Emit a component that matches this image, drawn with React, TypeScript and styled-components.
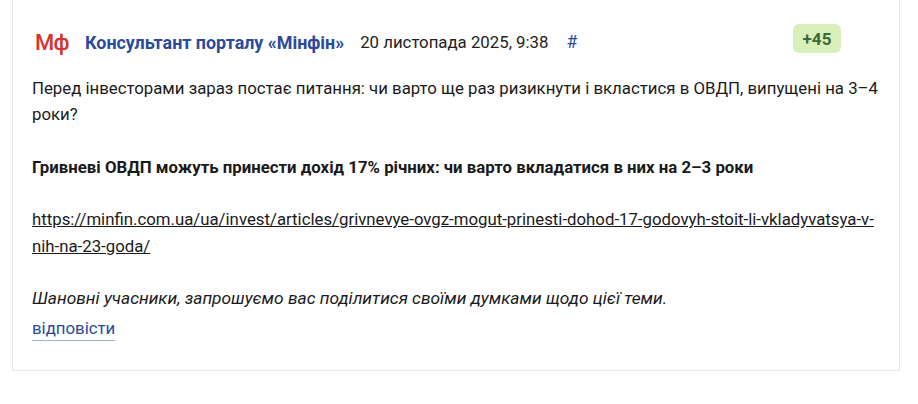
import React from 'react';
import styled, { createGlobalStyle } from 'styled-components';

const GlobalStyle = createGlobalStyle`
  html, body {
    margin: 0;
    padding: 0;
    background: #fff;
  }
  body {
    font-family: Roboto, "Liberation Sans", sans-serif;
    color: #1a1a1a;
  }
`;

const Page = styled.div`
  width: 918px;
  height: 404px;
  overflow: hidden;
  padding: 0 18px 0 12px;
  box-sizing: border-box;
`;

const Card = styled.article`
  height: 371px;
  box-sizing: border-box;
  border: 1px solid #e8e8e8;
  border-top: none;
  padding: 24px 19px 0 19px;
`;

const Header = styled.header`
  display: flex;
  align-items: center;
  height: 36px;
  margin-bottom: 15px;
  padding-right: 39px;
`;

const Logo = styled.div`
  width: 37px;
  padding-left: 3px;
  box-sizing: border-box;
  font-size: 22px;
  font-weight: 500;
  letter-spacing: -0.7px;
  color: #d5352f;
`;

const Author = styled.a`
  margin-left: 16px;
  font-size: 17.9px;
  font-weight: 700;
  color: #2b4a9b;
`;

const DateText = styled.span`
  margin-left: 16px;
  font-size: 16.8px;
  color: #222;
`;

const Anchor = styled.a`
  margin-left: 18px;
  font-size: 17.5px;
  color: #2b4a9b;
`;

const Rating = styled.div`
  margin-left: auto;
  align-self: flex-start;
  width: 48px;
  height: 29px;
  border-radius: 6px;
  background: #daf0bb;
  color: #3a6a3a;
  font-size: 17px;
  font-weight: 700;
  display: flex;
  align-items: center;
  justify-content: center;
`;

const Body = styled.div`
  font-size: 16.8px;
  line-height: 26.25px;
`;

const Paragraph = styled.p`
  margin: 0 0 26.25px;
`;

const Lead = styled(Paragraph)`
  font-weight: 700;
`;

const Link = styled.a`
  color: inherit;
  text-decoration: underline;
`;

const Closing = styled.p`
  margin: 0;
  font-style: italic;
  font-size: 17.33px;
`;

const Reply = styled.a`
  display: inline-block;
  margin-top: 5px;
  font-size: 16.8px;
  line-height: 24px;
  color: #2b4a9b;
  border-bottom: 1px solid #a3b0dc;
`;

export default function App() {
  return (
    <>
      <GlobalStyle />
      <Page>
        <Card>
          <Header>
            <Logo>Мф</Logo>
            <Author>Консультант порталу «Мінфін»</Author>
            <DateText>20 листопада 2025, 9:38</DateText>
            <Anchor>#</Anchor>
            <Rating>+45</Rating>
          </Header>
          <Body>
            <Paragraph>
              Перед інвесторами зараз постає питання: чи варто ще раз ризикнути і вкластися в ОВДП, випущені на 3–4 роки?
            </Paragraph>
            <Lead>Гривневі ОВДП можуть принести дохід 17% річних: чи варто вкладатися в них на 2–3 роки</Lead>
            <Paragraph>
              <Link>https://minfin.com.ua/ua/invest/articles/grivnevye-ovgz-mogut-prinesti-dohod-17-godovyh-stoit-li-vkladyvatsya-v-nih-na-23-goda/</Link>
            </Paragraph>
            <Closing>Шановні учасники, запрошуємо вас поділитися своїми думками щодо цієї теми.</Closing>
          </Body>
          <Reply>відповісти</Reply>
        </Card>
      </Page>
    </>
  );
}
